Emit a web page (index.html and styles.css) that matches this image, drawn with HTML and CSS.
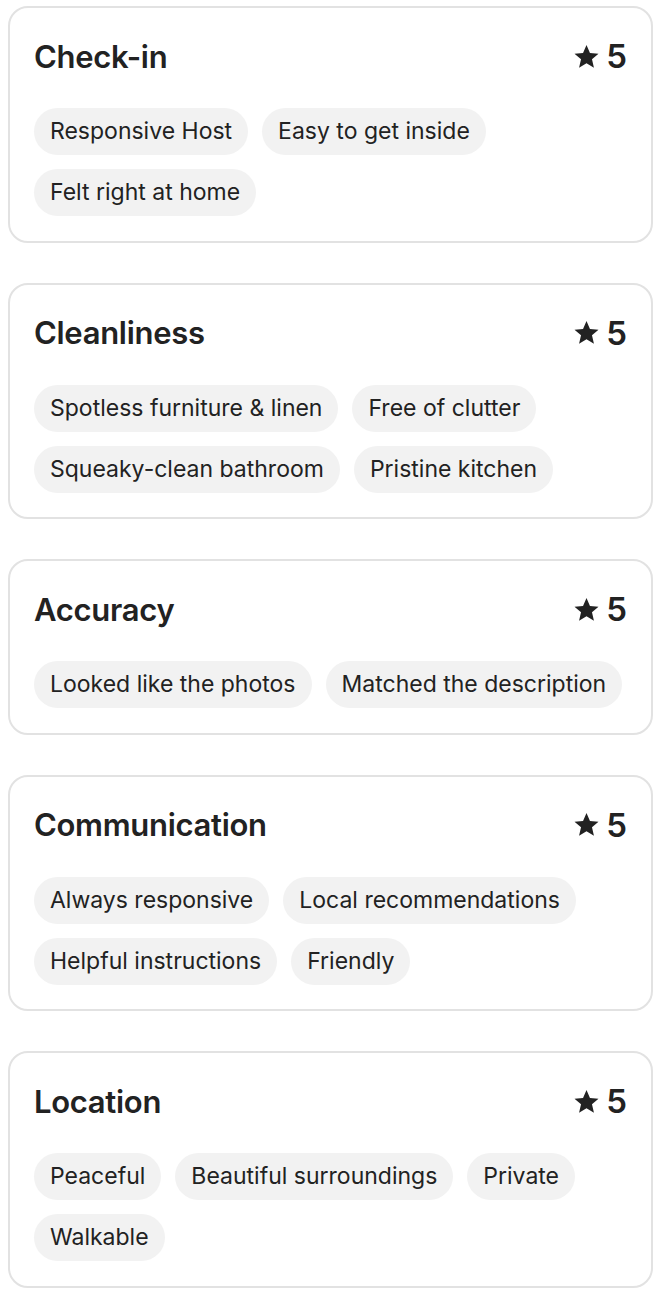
FILE: index.html
```html
<!DOCTYPE html>
<html lang="en">
<head>
    <meta charset="UTF-8">
    <meta name="viewport" content="width=device-width, initial-scale=1.0">
    <title>Ratings</title>
    <link rel="stylesheet" href="styles.css">
</head>
<body>
    <main class="ratings">
        <section class="rating-card">
            <div class="rating-head">
                <h2>Check-in</h2>
                <div class="score"><svg class="star" viewBox="0 0 32 32"><path d="M16 2.5l4.1 9.3 10.1.9-7.7 6.7 2.3 9.9L16 24.1l-8.8 5.2 2.3-9.9-7.7-6.7 10.1-.9z"/></svg>5</div>
            </div>
            <ul class="tags">
                <li>Responsive Host</li>
                <li>Easy to get inside</li>
                <li>Felt right at home</li>
            </ul>
        </section>

        <section class="rating-card">
            <div class="rating-head">
                <h2>Cleanliness</h2>
                <div class="score"><svg class="star" viewBox="0 0 32 32"><path d="M16 2.5l4.1 9.3 10.1.9-7.7 6.7 2.3 9.9L16 24.1l-8.8 5.2 2.3-9.9-7.7-6.7 10.1-.9z"/></svg>5</div>
            </div>
            <ul class="tags">
                <li>Spotless furniture &amp; linen</li>
                <li>Free of clutter</li>
                <li>Squeaky-clean bathroom</li>
                <li>Pristine kitchen</li>
            </ul>
        </section>

        <section class="rating-card">
            <div class="rating-head">
                <h2>Accuracy</h2>
                <div class="score"><svg class="star" viewBox="0 0 32 32"><path d="M16 2.5l4.1 9.3 10.1.9-7.7 6.7 2.3 9.9L16 24.1l-8.8 5.2 2.3-9.9-7.7-6.7 10.1-.9z"/></svg>5</div>
            </div>
            <ul class="tags">
                <li>Looked like the photos</li>
                <li>Matched the description</li>
            </ul>
        </section>

        <section class="rating-card">
            <div class="rating-head">
                <h2>Communication</h2>
                <div class="score"><svg class="star" viewBox="0 0 32 32"><path d="M16 2.5l4.1 9.3 10.1.9-7.7 6.7 2.3 9.9L16 24.1l-8.8 5.2 2.3-9.9-7.7-6.7 10.1-.9z"/></svg>5</div>
            </div>
            <ul class="tags">
                <li>Always responsive</li>
                <li>Local recommendations</li>
                <li>Helpful instructions</li>
                <li>Friendly</li>
            </ul>
        </section>

        <section class="rating-card">
            <div class="rating-head">
                <h2>Location</h2>
                <div class="score"><svg class="star" viewBox="0 0 32 32"><path d="M16 2.5l4.1 9.3 10.1.9-7.7 6.7 2.3 9.9L16 24.1l-8.8 5.2 2.3-9.9-7.7-6.7 10.1-.9z"/></svg>5</div>
            </div>
            <ul class="tags">
                <li>Peaceful</li>
                <li>Beautiful surroundings</li>
                <li>Private</li>
                <li>Walkable</li>
            </ul>
        </section>
    </main>
</body>
</html>
```

FILE: styles.css
```css
* {
    margin: 0;
    padding: 0;
    box-sizing: border-box;
}

body {
    font-family: 'Inter', 'Noto Sans', sans-serif;
    color: #222222;
    background: #ffffff;
}

.ratings {
    display: flex;
    flex-direction: column;
    gap: 40px;
    padding: 6px 7px 0 8px;
}

.rating-card {
    border: 2px solid #e2e2e2;
    border-radius: 20px;
    padding: 26px 24px 24.5px 24px;
}

.rating-head {
    display: flex;
    justify-content: space-between;
    align-items: center;
    height: 44px;
    margin-bottom: 30px;
}

.rating-head h2 {
    font-size: 31px;
    font-weight: 600;
    letter-spacing: -0.3px;
}

.score {
    display: flex;
    align-items: center;
    gap: 6px;
    font-size: 33px;
    font-weight: 600;
}

.star {
    width: 27px;
    height: 27px;
    fill: #222222;
}

.tags {
    list-style: none;
    display: flex;
    flex-wrap: wrap;
    gap: 14px;
}

.tags li {
    background: #f2f2f2;
    border-radius: 24px;
    padding: 0 16px;
    height: 47px;
    line-height: 47px;
    font-size: 23px;
    font-weight: 400;
}
```
